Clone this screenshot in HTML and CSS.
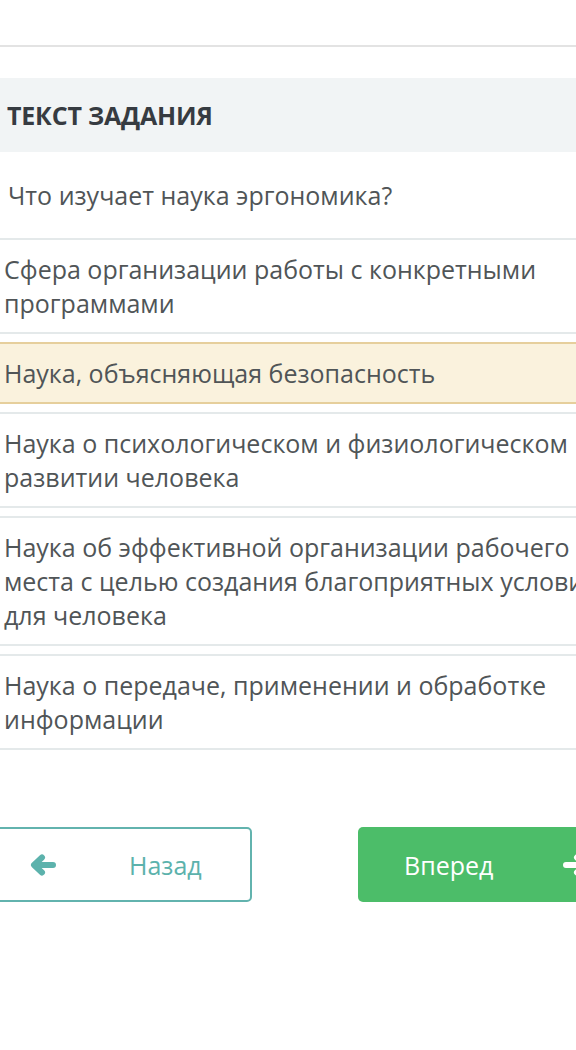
FILE: index.html
```html
<!DOCTYPE html>
<html lang="ru">
<head>
<meta charset="utf-8">
<title>Текст задания</title>
<link rel="stylesheet" href="styles.css">
</head>
<body>
<div class="page">
  <div class="topbar"></div>
  <div class="task-header">ТЕКСТ ЗАДАНИЯ</div>
  <div class="question">Что изучает наука эргономика?</div>
  <div class="options">
    <div class="option">Сфера организации работы с конкретными программами</div>
    <div class="option selected">Наука, объясняющая безопасность</div>
    <div class="option">Наука о психологическом и физиологическом развитии человека</div>
    <div class="option">Наука об эффективной организации рабочего места с целью создания благоприятных условий для человека</div>
    <div class="option">Наука о передаче, применении и обработке информации</div>
  </div>
  <div class="nav">
    <div class="btn btn-back">
      <svg class="icon" width="26" height="22" viewBox="0 0 26 22"><path d="M23 11H5M12 3.5L4 11l8 7.5" fill="none" stroke="currentColor" stroke-width="6" stroke-linecap="round" stroke-linejoin="round"/></svg>
      <span class="btn-label">Назад</span>
    </div>
    <div class="btn btn-next">
      <span class="btn-label">Вперед</span>
      <svg class="icon" width="26" height="22" viewBox="0 0 26 22"><path d="M3 11h18M14 3.5l8 7.5-8 7.5" fill="none" stroke="currentColor" stroke-width="6" stroke-linecap="round" stroke-linejoin="round"/></svg>
    </div>
  </div>
</div>
</body>
</html>
```
FILE: styles.css
```css
html, body {
  margin: 0;
  padding: 0;
  background: #ffffff;
}
body {
  width: 576px;
  height: 1050px;
  overflow: hidden;
  font-family: "Open Sans", "Noto Sans", sans-serif;
  color: #505557;
}
.page {
  width: 576px;
}
.topbar {
  height: 45px;
  border-bottom: 2px solid #e3e3e3;
}
.task-header {
  margin-top: 31px;
  height: 74px;
  background: #f1f4f5;
  display: flex;
  align-items: center;
  padding-left: 7px;
  font-size: 25px;
  font-weight: 700;
  color: #363b41;
  letter-spacing: -0.2px;
}
.question {
  height: 86px;
  display: flex;
  align-items: center;
  padding-left: 8px;
  font-size: 25px;
  color: #505557;
}
.options {
  display: flex;
  flex-direction: column;
  gap: 8px;
  width: 630px;
}
.option {
  border-top: 2px solid #e4e9ea;
  border-bottom: 2px solid #e4e9ea;
  padding: 12px 4px;
  font-size: 25px;
  line-height: 34px;
  color: #505557;
}
.option.selected {
  background: #faf2dd;
  border-color: #e6cf9c;
}
.nav {
  margin-top: 77px;
  margin-left: -20px;
  display: flex;
  gap: 106px;
}
.btn {
  width: 272px;
  height: 75px;
  box-sizing: border-box;
  border-radius: 5px;
  display: flex;
  align-items: center;
  font-size: 25px;
  flex-shrink: 0;
}
.btn-back {
  border: 2px solid #62b3ae;
  color: #5cb2ac;
  padding-left: 48px;
}
.btn-back .btn-label {
  margin-left: 73px;
}
.btn-next {
  background: #4cbd69;
  color: #ffffff;
  padding-left: 46px;
}
.btn-next .icon {
  margin-left: 70px;
}
```
